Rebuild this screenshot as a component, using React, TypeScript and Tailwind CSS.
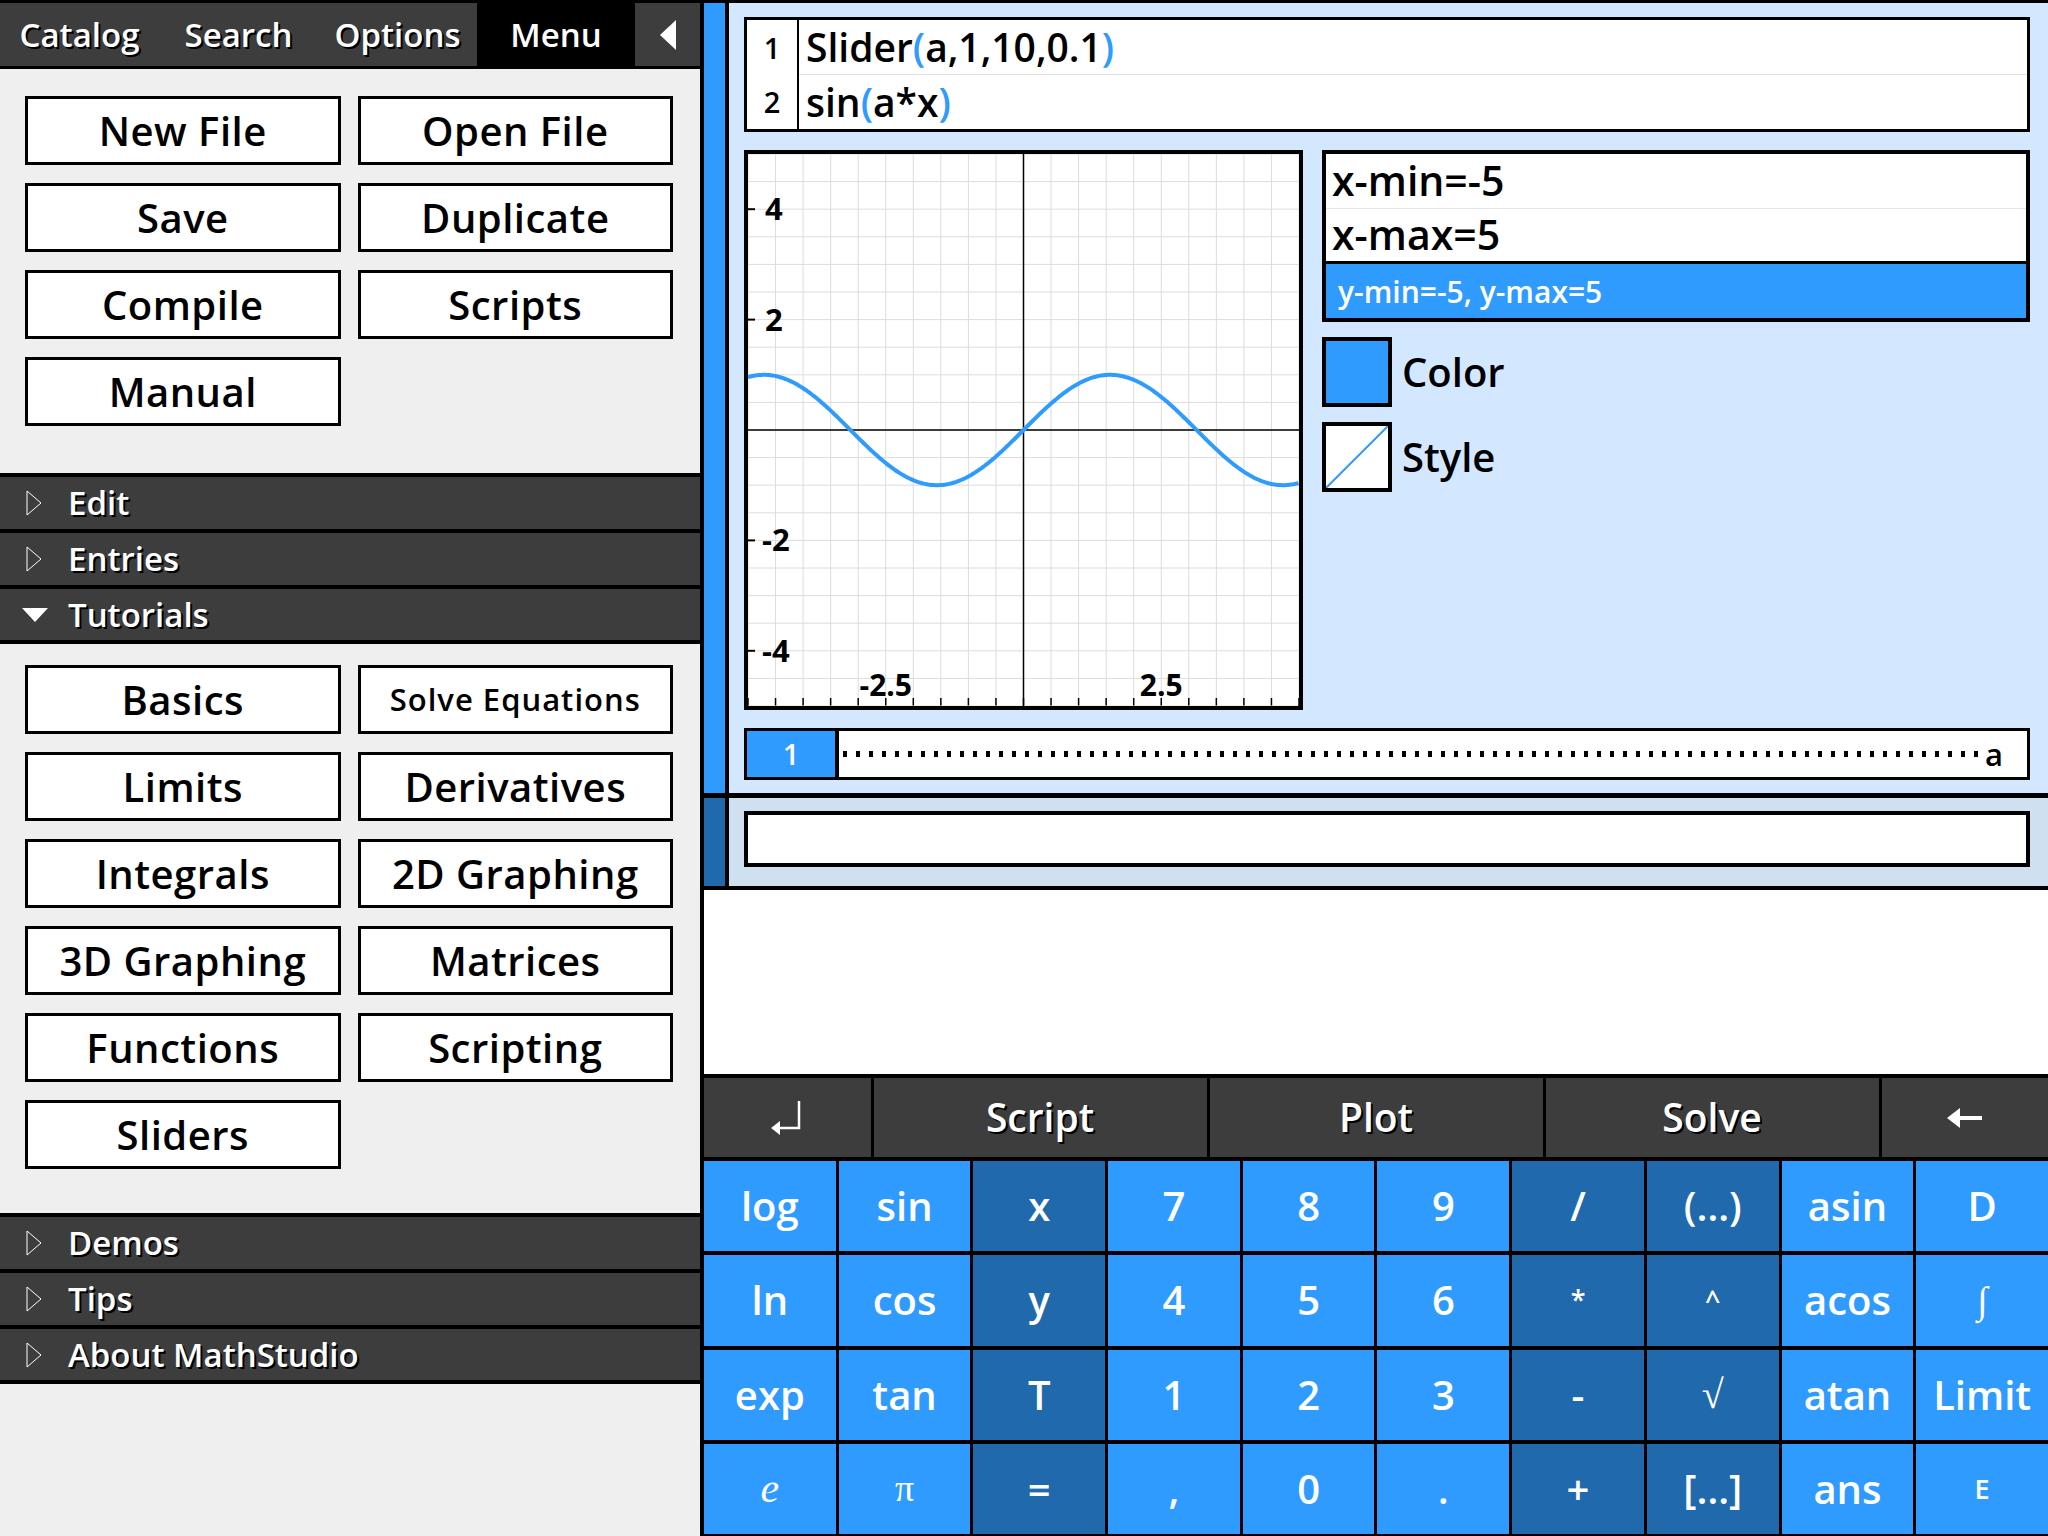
import React from 'react';

const BLUE = '#2f9bff';

function TriRight() {
    return (
        <svg width="16" height="26" viewBox="0 0 16 26" className="shrink-0">
            <polygon points="1,1 15,13 1,25" fill="none" stroke="#fff" strokeWidth="1" />
        </svg>
    );
}

function TriDown() {
    return (
        <svg width="26" height="16" viewBox="0 0 26 16" className="shrink-0">
            <polygon points="0,1 26,1 13,15" fill="#fff" />
        </svg>
    );
}

function Header({ label, open = false, last = false }: { label: string; open?: boolean; last?: boolean }) {
    return (
        <div className={`flex items-center bg-[#3d3d3d] border-t-4 border-black ${last ? 'h-[59px] border-b-4' : 'h-[56px]'}`}>
            <div className="w-[68px] pl-[22px] flex items-center">
                {open ? <TriDown /> : <div className="pl-[4px]"><TriRight /></div>}
            </div>
            <span className="text-white text-[33px] font-semibold [text-shadow:2px_2px_0_#000]">{label}</span>
        </div>
    );
}

function MenuButton({ label, small = false }: { label: string; small?: boolean }) {
    return (
        <div className="h-[69px] bg-white border-[3px] border-black flex items-center justify-center">
            <span className={`text-black font-semibold ${small ? 'text-[31px] tracking-[1px]' : 'text-[40px] tracking-[0.5px]'}`}>{label}</span>
        </div>
    );
}

function ButtonGrid({ items }: { items: { label: string; small?: boolean }[] }) {
    return (
        <div className="grid grid-cols-2 gap-x-[17px] gap-y-[18px] pl-[25px] pr-[27px]">
            {items.map((it) => (
                <MenuButton key={it.label} label={it.label} small={it.small} />
            ))}
        </div>
    );
}

function LeftPanel() {
    return (
        <div className="w-[704px] h-full bg-[#efefef] flex flex-col border-r-4 border-black shrink-0">
            <div className="h-[69px] flex bg-[#3d3d3d] border-t-[3px] border-b-[3px] border-black">
                {['Catalog', 'Search', 'Options'].map((t) => (
                    <div key={t} className="w-[159px] flex items-center justify-center text-white text-[33px] font-semibold [text-shadow:2px_2px_0_#000]">
                        {t}
                    </div>
                ))}
                <div className="w-[158px] bg-black flex items-center justify-center text-white text-[33px] font-semibold">Menu</div>
                <div className="flex-1 flex items-center justify-center">
                    <svg width="16" height="30" viewBox="0 0 16 30">
                        <polygon points="16,0 16,30 0,15" fill="#fff" />
                    </svg>
                </div>
            </div>

            <div className="pt-[27px] pb-[47px]">
                <ButtonGrid
                    items={[
                        { label: 'New File' },
                        { label: 'Open File' },
                        { label: 'Save' },
                        { label: 'Duplicate' },
                        { label: 'Compile' },
                        { label: 'Scripts' },
                        { label: 'Manual' },
                    ]}
                />
            </div>

            <Header label="Edit" />
            <Header label="Entries" />
            <Header label="Tutorials" open last />

            <div className="pt-[21px] pb-[44px]">
                <ButtonGrid
                    items={[
                        { label: 'Basics' },
                        { label: 'Solve Equations', small: true },
                        { label: 'Limits' },
                        { label: 'Derivatives' },
                        { label: 'Integrals' },
                        { label: '2D Graphing' },
                        { label: '3D Graphing' },
                        { label: 'Matrices' },
                        { label: 'Functions' },
                        { label: 'Scripting' },
                        { label: 'Sliders' },
                    ]}
                />
            </div>

            <Header label="Demos" />
            <Header label="Tips" />
            <Header label="About MathStudio" last />
        </div>
    );
}

function Graph() {
    const W = 551;
    const H = 552;
    const ox = W / 2;
    const oy = H / 2;
    const ux = W / 10;
    const uy = H / 10;
    const grid: React.ReactNode[] = [];
    for (let i = -10; i <= 10; i++) {
        const x = ox + (i * ux) / 2;
        const y = oy + (i * uy) / 2;
        grid.push(<line key={'v' + i} x1={x} y1={0} x2={x} y2={H} stroke="#dcdcdc" strokeWidth="1" />);
        grid.push(<line key={'h' + i} x1={0} y1={y} x2={W} y2={y} stroke="#dcdcdc" strokeWidth="1" />);
        grid.push(<line key={'t' + i} x1={x} y1={H} x2={x} y2={H - 8} stroke="#000" strokeWidth="1.5" />);
    }
    let d = '';
    for (let px = 0; px <= W; px += 1.5) {
        const xv = (px - ox) / ux;
        const yv = Math.sin(xv);
        d += `${px === 0 ? 'M' : 'L'}${px.toFixed(1)},${(oy - yv * uy).toFixed(1)}`;
    }
    const yLabels = [4, 2, -2, -4];
    const font = "'Open Sans', sans-serif";
    return (
        <svg width={W} height={H} viewBox={`0 0 ${W} ${H}`} className="block">
            <rect x="0" y="0" width={W} height={H} fill="#fff" />
            {grid}
            <line x1={ox} y1={0} x2={ox} y2={H} stroke="#000" strokeWidth="1.5" />
            <line x1={0} y1={oy} x2={W} y2={oy} stroke="#000" strokeWidth="1.5" />
            {yLabels.map((v) => (
                <g key={v}>
                    <line x1={0} y1={oy - v * uy} x2={7} y2={oy - v * uy} stroke="#000" strokeWidth="2" />
                    <text x={v < 0 ? 14 : 17} y={oy - v * uy + 11} fontSize="31" fontWeight="700" fontFamily={font} fill="#000">
                        {v}
                    </text>
                </g>
            ))}
            <text x={ox - 2.5 * ux} y={H - 10} textAnchor="middle" fontSize="30" fontWeight="700" fontFamily={font}>
                -2.5
            </text>
            <text x={ox + 2.5 * ux} y={H - 10} textAnchor="middle" fontSize="30" fontWeight="700" fontFamily={font}>
                2.5
            </text>
            <path d={d} fill="none" stroke={BLUE} strokeWidth="4" strokeLinejoin="round" />
        </svg>
    );
}

function Paren({ c }: { c: string }) {
    return <span className="text-[#2f9bff]">{c}</span>;
}

function TopPanel() {
    return (
        <div className="h-[793px] flex border-t-[3px] border-black">
            <div className="w-[25px] bg-[#2f9bff] border-r-4 border-black shrink-0" />
            <div className="flex-1 bg-[#d3e8fe] pl-[15px] pr-[18px] pt-[14px] flex flex-col">
                <div className="h-[115px] bg-white border-[3px] border-black flex">
                    <div className="w-[52px] border-r-2 border-black flex flex-col font-semibold">
                        <div className="flex-1 flex items-center justify-center text-[29px] leading-none">1</div>
                        <div className="flex-1 flex items-center justify-center text-[29px] leading-none">2</div>
                    </div>
                    <div className="flex-1 flex flex-col font-semibold">
                        <div className="h-[55px] flex items-center pl-[7px] pb-[2px] text-[39px] leading-none border-b border-[#e2e2e2]">
                            Slider<Paren c="(" />a,1,10,0.1<Paren c=")" />
                        </div>
                        <div className="flex-1 flex items-center pl-[7px] pb-[2px] text-[39px] leading-none">
                            sin<Paren c="(" />a*x<Paren c=")" />
                        </div>
                    </div>
                </div>

                <div className="flex gap-[19px] mt-[18px]">
                    <div className="border-4 border-black shrink-0">
                        <Graph />
                    </div>
                    <div className="flex-1 flex flex-col font-semibold">
                        <div className="h-[172px] border-4 border-black bg-white flex flex-col">
                            <div className="h-[55px] flex items-center pl-[6px] text-[41px] border-b border-[#e6e6e6]">x-min=-5</div>
                            <div className="h-[55px] flex items-center pl-[6px] text-[41px] border-b-[3px] border-black">x-max=5</div>
                            <div className="flex-1 bg-[#2f9bff] flex items-center pl-[12px] text-[30px] text-white">y-min=-5, y-max=5</div>
                        </div>
                        <div className="flex items-center gap-[10px] mt-[15px]">
                            <div className="w-[70px] h-[70px] bg-[#2f9bff] border-4 border-black" />
                            <span className="text-[40px]">Color</span>
                        </div>
                        <div className="flex items-center gap-[10px] mt-[15px]">
                            <div className="w-[70px] h-[70px] bg-white border-4 border-black">
                                <svg width="62" height="62" viewBox="0 0 62 62" className="block">
                                    <line x1="0" y1="62" x2="62" y2="0" stroke={BLUE} strokeWidth="2" />
                                </svg>
                            </div>
                            <span className="text-[40px]">Style</span>
                        </div>
                    </div>
                </div>

                <div className="h-[52px] mt-[18px] border-[3px] border-black bg-white flex">
                    <div className="w-[92px] bg-[#2f9bff] border-r-4 border-black flex items-center justify-center text-white text-[29px] font-semibold">1</div>
                    <div className="flex-1 flex items-center pl-[4px] pr-[24px]">
                        <div className="flex-1 h-[6px] bg-[repeating-linear-gradient(90deg,#000_0_4px,transparent_4px_13px)]" />
                        <span className="text-[31px] font-semibold ml-[6px] leading-none">a</span>
                    </div>
                </div>
            </div>
        </div>
    );
}

function InputPanel() {
    return (
        <div className="h-[97px] flex border-t-[5px] border-b-4 border-black">
            <div className="w-[25px] bg-[#2169ad] border-r-4 border-black shrink-0" />
            <div className="flex-1 bg-[#cfe0f1] pl-[15px] pr-[18px] pt-[13px]">
                <div className="h-[56px] bg-white border-4 border-black" />
            </div>
        </div>
    );
}

const KEYS = [
    ['log', 'sin', 'x', '7', '8', '9', '/', '(…)', 'asin', 'D'],
    ['ln', 'cos', 'y', '4', '5', '6', '*', '^', 'acos', '∫'],
    ['exp', 'tan', 'T', '1', '2', '3', '-', '√', 'atan', 'Limit'],
    ['e', 'π', '=', ',', '0', '.', '+', '[…]', 'ans', 'E'],
];

function keyClass(k: string) {
    if (k === 'e') return "font-['Liberation_Serif',serif] italic text-[42px]";
    if (k === 'π') return "font-['Liberation_Serif',serif] text-[38px]";
    if (k === '∫') return "font-['Liberation_Serif',serif] text-[38px]";
    if (k === '√') return "font-['Liberation_Serif',serif] text-[40px]";
    if (k === 'E') return 'text-[27px] font-semibold';
    if (k === '*' || k === '^') return 'text-[27px] font-semibold';
    return 'text-[40px] font-semibold';
}

function Keyboard() {
    return (
        <div className="h-[462px] bg-black flex flex-col pt-[4px] gap-[4px]">
            <div className="h-[79px] grid grid-cols-[1fr_2fr_2fr_2fr_1fr] gap-[3px]">
                <div className="bg-[#3d3d3d] flex items-center justify-center">
                    <svg width="34" height="38" viewBox="0 0 34 38">
                        <path d="M29 2 V29 H8" fill="none" stroke="#fff" strokeWidth="2.5" />
                        <polygon points="1,29 10,22 10,36" fill="#fff" />
                    </svg>
                </div>
                {['Script', 'Plot', 'Solve'].map((t) => (
                    <div key={t} className="bg-[#3d3d3d] flex items-center justify-center text-white text-[39px] font-semibold [text-shadow:2px_2px_0_#000]">
                        {t}
                    </div>
                ))}
                <div className="bg-[#3d3d3d] flex items-center justify-center">
                    <svg width="36" height="24" viewBox="0 0 36 24">
                        <path d="M10 12 H35" stroke="#fff" strokeWidth="4" />
                        <polygon points="0,12 13,2 13,22" fill="#fff" />
                    </svg>
                </div>
            </div>
            <div className="flex-1 grid grid-cols-10 grid-rows-4 gap-x-[3px] gap-y-[4px] pb-[2px]">
                {KEYS.flatMap((row, r) =>
                    row.map((k, c) => {
                        const dark = c === 2 || c === 6 || c === 7;
                        return (
                            <div
                                key={r + '-' + c}
                                className={`${dark ? 'bg-[#2169ad]' : 'bg-[#2f9bff]'} flex items-center justify-center text-white`}
                            >
                                <span className={keyClass(k)}>{k}</span>
                            </div>
                        );
                    })
                )}
            </div>
        </div>
    );
}

export default function App() {
    return (
        <div className="w-[2048px] h-[1536px] flex overflow-hidden font-['Open_Sans',sans-serif] text-black">
            <LeftPanel />
            <div className="flex-1 flex flex-col">
                <TopPanel />
                <InputPanel />
                <div className="flex-1 bg-white" />
                <Keyboard />
            </div>
        </div>
    );
}
